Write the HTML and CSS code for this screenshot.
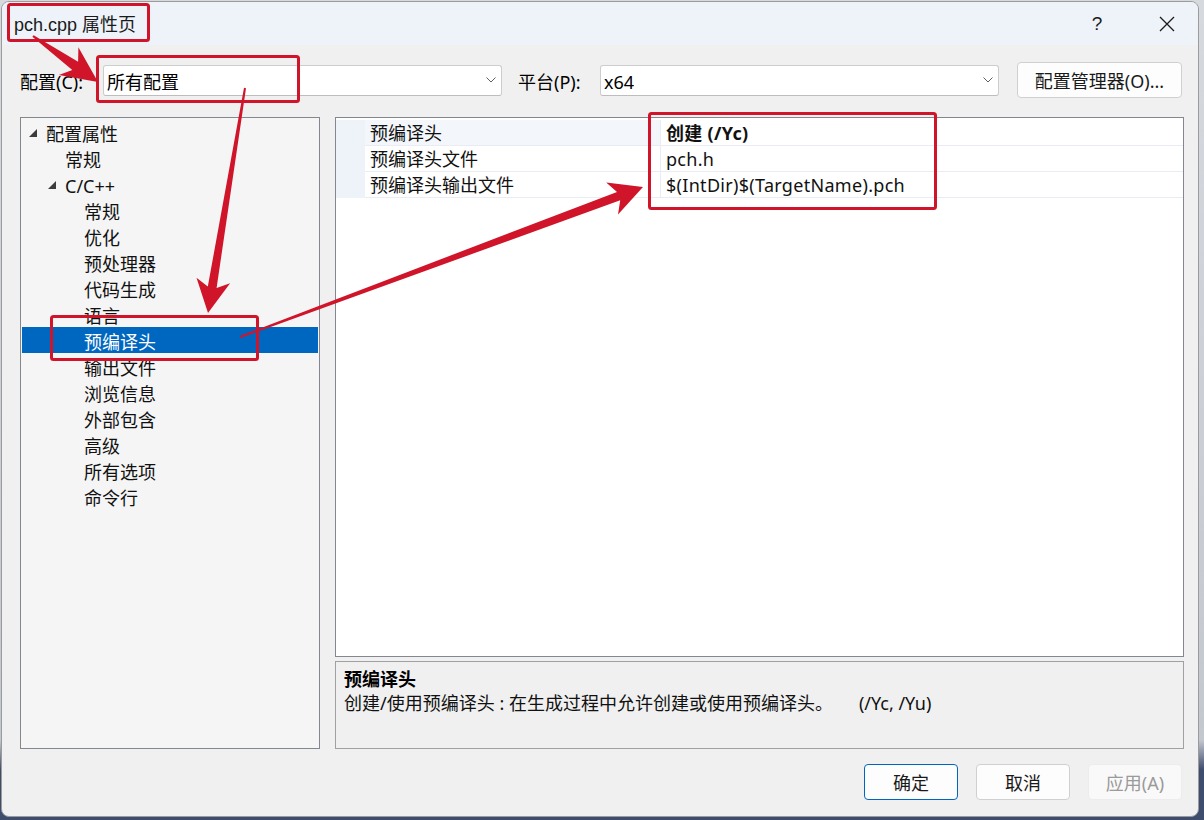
FILE: index.html
```html
<!DOCTYPE html>
<html lang="zh-CN">
<head>
<meta charset="utf-8">
<title>pch.cpp 属性页</title>
<link rel="stylesheet" href="styles.css">
</head>
<body>
<div class="window">
  <div class="titlebar">
    <span class="title">pch.cpp 属性页</span>
    <div class="caption">
      <span class="help">?</span>
      <svg class="close" width="16" height="16" viewBox="0 0 16 16"><path d="M1 1 L15 15 M15 1 L1 15" stroke="#1b1b1b" stroke-width="1.3" fill="none"/></svg>
    </div>
  </div>
  <div class="content">
    <div class="config-row">
      <span class="label l1">配置(C):</span>
      <div class="combo c1"><span>所有配置</span><svg class="chev" width="10" height="6" viewBox="0 0 10 6"><path d="M0.5 0.5 L5 5 L9.5 0.5" stroke="#5f5f5f" stroke-width="1" fill="none"/></svg></div>
      <span class="label l2">平台(P):</span>
      <div class="combo c2"><span>x64</span><svg class="chev" width="10" height="6" viewBox="0 0 10 6"><path d="M0.5 0.5 L5 5 L9.5 0.5" stroke="#5f5f5f" stroke-width="1" fill="none"/></svg></div>
      <div class="btn mgr">配置管理器(O)...</div>
    </div>
    <div class="main">
      <div class="tree">
        <div class="node lv0"><span class="tog"><svg width="8" height="8" viewBox="0 0 8 8"><polygon points="8,0 8,8 0,8" fill="#3c3c3c"/></svg></span>配置属性</div>
        <div class="node lv1"><span class="tog"></span>常规</div>
        <div class="node lv1"><span class="tog"><svg width="8" height="8" viewBox="0 0 8 8"><polygon points="8,0 8,8 0,8" fill="#3c3c3c"/></svg></span>C/C++</div>
        <div class="node lv2"><span class="tog"></span>常规</div>
        <div class="node lv2"><span class="tog"></span>优化</div>
        <div class="node lv2"><span class="tog"></span>预处理器</div>
        <div class="node lv2"><span class="tog"></span>代码生成</div>
        <div class="node lv2"><span class="tog"></span>语言</div>
        <div class="node lv2 sel"><span class="tog"></span>预编译头</div>
        <div class="node lv2"><span class="tog"></span>输出文件</div>
        <div class="node lv2"><span class="tog"></span>浏览信息</div>
        <div class="node lv2"><span class="tog"></span>外部包含</div>
        <div class="node lv2"><span class="tog"></span>高级</div>
        <div class="node lv2"><span class="tog"></span>所有选项</div>
        <div class="node lv2"><span class="tog"></span>命令行</div>
      </div>
      <div class="right">
        <div class="grid">
          <div class="prow first">
            <span class="margin"></span><span class="pname">预编译头</span><span class="pval bold">创建 (/Yc)</span>
          </div>
          <div class="prow">
            <span class="margin"></span><span class="pname">预编译头文件</span><span class="pval">pch.h</span>
          </div>
          <div class="prow">
            <span class="margin"></span><span class="pname">预编译头输出文件</span><span class="pval">$(IntDir)$(TargetName).pch</span>
          </div>
        </div>
        <div class="desc">
          <div class="desc-title">预编译头</div>
          <div class="desc-text">创建/使用预编译头 : 在生成过程中允许创建或使用预编译头。<span class="sw">(/Yc, /Yu)</span></div>
        </div>
      </div>
    </div>
    <div class="buttons">
      <div class="btn dlg primary">确定</div>
      <div class="btn dlg">取消</div>
      <div class="btn dlg disabled">应用(A)</div>
    </div>
  </div>
</div>
<svg class="annot" width="1204" height="820" viewBox="0 0 1204 820">
  <g fill="none" stroke="#d0152a" stroke-width="3">
    <rect x="8.5" y="4.5" width="140" height="36" rx="2"/>
    <rect x="97.5" y="56.5" width="201" height="45" rx="2"/>
    <rect x="51.5" y="316.5" width="206" height="43" rx="2"/>
    <rect x="649.5" y="113.5" width="286" height="95" rx="2"/>
  </g>
  <g fill="#d0152a">
    <polygon points="32.4,36.8 72.3,69.9 58.8,75.1 98,82 78.4,47.3 78.1,61.7 33.6,35.2"/>
    <polygon points="244,87.8 207.8,286.6 196.5,277.7 208,313 230.1,283.2 216.6,288.0 246,88.2"/>
    <polygon points="240.3,337.9 620.2,200.3 618.0,214.4 643,187 606.2,182.6 617.0,191.9 239.7,336.1"/>
  </g>
</svg>
</body>
</html>
```
FILE: styles.css
```css
* { box-sizing: border-box; }
html, body { margin: 0; padding: 0; }
body {
  width: 1204px;
  height: 820px;
  position: relative;
  overflow: hidden;
  background: linear-gradient(to bottom, #d6d9de 0px, #c3c7ce 740px, #3e4c6e 770px, #3e4c6e 820px);
  font-family: "Noto Sans", "Noto Sans CJK SC", sans-serif;
  font-size: 18px;
  color: #000;
}
.window {
  margin: 1px 0 0 1px;
  width: 1198px;
  height: 816px;
  border: 1px solid #9b9b9b;
  border-radius: 8px;
  background: #f0f0f0;
  overflow: hidden;
}
.titlebar {
  height: 43px;
  background: #eef2f9;
  display: flex;
  align-items: center;
  padding-left: 12px;
  padding-right: 23px;
}
.title {
  font-family: "Liberation Sans", "Noto Sans CJK SC", sans-serif;
  font-size: 18px;
  color: #1a1a1a;
  line-height: 24px;
  padding-top: 2px;
}
.caption {
  margin-left: auto;
  display: flex;
  align-items: center;
}
.help {
  width: 16px;
  text-align: center;
  font-family: "Liberation Sans", sans-serif;
  font-size: 19px;
  color: #1b1b1b;
  line-height: 24px;
  margin-right: 54px;
}
.close { display: block; }
.content {
  padding: 17px 14px 16px 18px;
}
.config-row {
  display: flex;
  align-items: center;
  height: 36px;
}
.label {
  line-height: 24px;
  white-space: nowrap;
  padding-top: 4px;
}
.l1 { width: 83px; }
.l2 { width: 82px; margin-left: 16px; }
.combo {
  height: 31px;
  width: 399px;
  background: #fff;
  border: 1px solid #cdcdcd;
  border-bottom-color: #bdbdbd;
  border-radius: 3px;
  display: flex;
  align-items: center;
  padding-left: 3px;
  padding-right: 5px;
  line-height: 24px;
}
.combo span { flex: 1; padding-top: 4px; }
.chev { display: block; }
.btn {
  background: #fdfdfd;
  border: 1px solid #d0d0d0;
  border-radius: 4px;
  display: flex;
  align-items: center;
  justify-content: center;
  height: 36px;
  line-height: 24px;
  padding-top: 2px;
  color: #1a1a1a;
}
.mgr {
  width: 165px;
  margin-left: 18px;
}
.main {
  margin-top: 19px;
  height: 632px;
  display: flex;
  gap: 15px;
}
.tree {
  width: 300px;
  flex: none;
  border: 1px solid #828790;
  background: #f5f5f5;
  padding-top: 1px;
}
.node {
  height: 26px;
  line-height: 24px;
  margin: 0 1px;
  display: flex;
  align-items: center;
  color: #111;
  white-space: nowrap;
  padding-top: 3px;
}
.node.lv1 { padding-left: 19px; }
.node.lv2 { padding-left: 38px; }
.tog {
  width: 24px;
  flex: none;
  display: flex;
  align-items: center;
  padding-left: 7px;
}
.tog svg { display: block; margin-top: -2px; }
.node.sel {
  background: #0067c0;
  color: #fff;
}
.right {
  flex: 1;
  display: flex;
  flex-direction: column;
  gap: 4px;
}
.grid {
  height: 540px;
  flex: none;
  border: 1px solid #828790;
  background: #fff;
  padding-top: 2px;
}
.prow {
  display: grid;
  grid-template-columns: 29px 296px 1fr;
  height: 26px;
}
.prow > span {
  border-bottom: 1px solid #e9edf3;
  white-space: nowrap;
  line-height: 23px;
  padding-top: 2px;
}
.margin {
  background: #eef2f9;
  border-bottom-color: #eef2f9 !important;
}
.pname {
  padding-left: 5px;
  border-right: 1px solid #e9edf3;
  color: #111;
}
.prow.first .pname { background: #f3f6fb; }
.pval {
  padding-left: 5px;
  color: #111;
  letter-spacing: 0.3px;
}
.bold { font-weight: 700; }
.desc {
  flex: 1;
  border: 1px solid #a0a0a0;
  background: #f0f0f0;
  padding: 5px 8px;
}
.desc-title {
  font-weight: 700;
  line-height: 24px;
}
.desc-text {
  line-height: 24px;
  color: #111;
  white-space: nowrap;
}
.sw { margin-left: 26px; }
.buttons {
  margin-top: 15px;
  display: flex;
  justify-content: flex-end;
  gap: 18px;
  padding-right: 2px;
}
.dlg { width: 94px; }
.primary { border-color: #0067c0; }
.disabled {
  background: #f9f9f9;
  border-color: #ececec;
  color: #9a9a9a;
}
.annot {
  position: absolute;
  left: 0;
  top: 0;
  pointer-events: none;
}
```
